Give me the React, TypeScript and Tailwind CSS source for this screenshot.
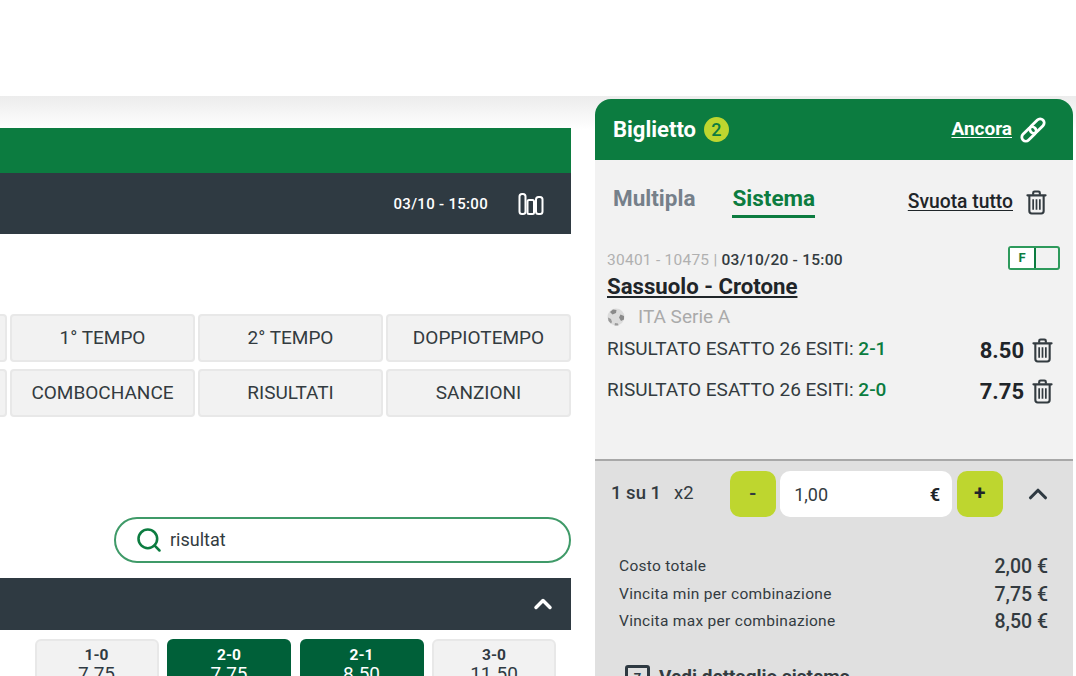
import { ChevronUp, Search } from "lucide-react";

const font = "font-['Roboto',sans-serif]";

function TrashIcon({ className }: { className?: string }) {
  return (
    <svg viewBox="0 0 22 26" fill="none" stroke="currentColor" strokeWidth="2.200" className={className}>
      <path d="M1.500 5.500h19" strokeLinecap="round" />
      <path d="M7.500 5V3a1.500 1.500 0 0 1 1.500-1.500h4A1.500 1.500 0 0 1 14.500 3v2" />
      <path d="M3.500 5.500v16.500a2.500 2.500 0 0 0 2.500 2.500h10a2.500 2.500 0 0 0 2.500-2.500V5.500" />
      <path d="M7.500 9.500v11M11 9.500v11M14.500 9.500v11" strokeWidth="1.800" />
    </svg>
  );
}

function ChainIcon() {
  return (
    <svg viewBox="0 0 26 26" fill="none" stroke="white" strokeWidth="2.800" className="w-[26px] h-[26px]">
      <rect x="13" y="0.500" width="8" height="17" rx="4" transform="rotate(45 17 9)" />
      <rect x="5" y="8.500" width="8" height="17" rx="4" transform="rotate(45 9 17)" />
    </svg>
  );
}

function BarsIcon() {
  return (
    <svg viewBox="0 0 26 22" fill="none" stroke="white" strokeWidth="2" className="w-[26px] h-[22px]">
      <rect x="1.500" y="1" width="6" height="20" rx="2.500" />
      <rect x="9.500" y="7" width="6.500" height="14" rx="1.500" />
      <rect x="18" y="4" width="6.500" height="17" rx="2.500" />
    </svg>
  );
}

function BallIcon() {
  return (
    <svg viewBox="0 0 18 18" className="w-[18px] h-[18px]">
      <circle cx="9" cy="9" r="8.500" fill="#dcdcdc" />
      <path d="M6 1.500l3.500.5-.5 3-3.500 1.500L3 4z" fill="#8a8a8a" />
      <path d="M13.500 6.500l3.500 1.500v3.500l-3 1.500-2-3.500z" fill="#8a8a8a" />
      <path d="M1 9.500l3 1.500 1 3-1 1.500-2.500-2.500z" fill="#9a9a9a" />
      <path d="M8 15l3 .5.500 2h-4z" fill="#9a9a9a" />
    </svg>
  );
}

function MarketButton({ label }: { label: string }) {
  return (
    <div className="w-[185px] h-[48px] shrink-0 flex items-center justify-center rounded-[4px] bg-[#f2f2f2] border-2 border-[#e8e8e8] text-[19px] font-normal text-[#333b40]">
      {label}
    </div>
  );
}

function OddButton({ score, odd, active }: { score: string; odd: string; active?: boolean }) {
  return (
    <div
      className={
        active
          ? "w-[124px] h-[60px] shrink-0 pt-[7px] rounded-[6px] bg-[#006039] text-white text-center"
          : "w-[124px] h-[60px] shrink-0 pt-[5px] rounded-[6px] bg-[#f2f2f2] border-2 border-[#e8e8e8] text-[#2f3a42] text-center"
      }
    >
      <div className="text-[15.500px] font-bold leading-[18px]">{score}</div>
      <div className="text-[19px] leading-[19px]">{odd}</div>
    </div>
  );
}

function SelectionRow({ score, odd }: { score: string; odd: string }) {
  return (
    <div className="flex items-center justify-between h-[41px] pr-[3px]">
      <span className="text-[19px] text-[#333b40]">
        RISULTATO ESATTO 26 ESITI: <span className="font-medium text-[#0b7c3f]">{score}</span>
      </span>
      <span className="flex items-center gap-[8px] pt-[2px]">
        <span className="text-[22px] font-bold text-[#1f2529]">{odd}</span>
        <TrashIcon className="w-[21px] h-[25px] text-[#333b40]" />
      </span>
    </div>
  );
}

function SummaryRow({ label, value }: { label: string; value: string }) {
  return (
    <div className="flex items-center justify-between h-[27.500px]">
      <span className="text-[15.500px] tracking-[0.3px] text-[#333b40]">{label}</span>
      <span className="text-[19.500px] font-medium text-[#333b40] pr-[1px]">{value}</span>
    </div>
  );
}

export default function App() {
  return (
    <div className={`${font} relative w-[1076px] h-[676px] overflow-hidden bg-white`}>
      <div className="h-[96px]" />
      <div className="h-[580px] flex bg-gradient-to-b from-[#ececec] to-white to-[34px] bg-no-repeat">
        {/* match area */}
        <div className="w-[571px] shrink-0 flex flex-col items-end pt-[32px]">
          <div className="w-full h-[45px] shrink-0 bg-[#0c7c40]" />
          <div className="w-full h-[61px] shrink-0 bg-[#2f3a42] flex items-center justify-end pr-[27px] gap-[30px]">
            <span className="text-[15px] font-medium text-white tracking-[0.3px] pt-[2px]">03/10 - 15:00</span>
            <BarsIcon />
          </div>

          <div className="mt-[80px] flex flex-col gap-[7px] w-full shrink-0">
            <div className="flex justify-end gap-[3px]">
              <MarketButton label="1X2" />
              <MarketButton label="1° TEMPO" />
              <MarketButton label="2° TEMPO" />
              <MarketButton label="DOPPIOTEMPO" />
            </div>
            <div className="flex justify-end gap-[3px]">
              <MarketButton label="GOL" />
              <MarketButton label="COMBOCHANCE" />
              <MarketButton label="RISULTATI" />
              <MarketButton label="SANZIONI" />
            </div>
          </div>

          <div className="mt-[100px] w-[457px] h-[46px] shrink-0 rounded-full border-2 border-[#3f9a68] flex items-center pl-[19px] gap-[7px]">
            <Search className="w-[28px] h-[28px] text-[#0c7c40]" strokeWidth={2.200} />
            <span className="text-[18px] text-[#333b40] pb-[2px]">risultat</span>
          </div>

          <div className="mt-[15px] w-full h-[52px] shrink-0 bg-[#2f3a42] flex items-center justify-end pr-[14px]">
            <ChevronUp className="w-[28px] h-[28px] text-white" strokeWidth={3} />
          </div>

          <div className="mt-[9px] shrink-0 flex justify-end gap-[8.500px] pr-[15px]">
            <OddButton score="1-0" odd="7.75" />
            <OddButton score="2-0" odd="7.75" active />
            <OddButton score="2-1" odd="8.50" active />
            <OddButton score="3-0" odd="11.50" />
          </div>
        </div>

        {/* ticket */}
        <div className="ml-[24px] mt-[3px] w-[478px] shrink-0 flex flex-col">
          <div className="h-[61px] shrink-0 rounded-t-[16px] bg-[#0c7c40] flex items-center justify-between pl-[18px] pr-[27px]">
            <div className="flex items-center gap-[8px]">
              <span className="text-[22px] font-bold text-white">Biglietto</span>
              <span className="w-[25px] h-[25px] rounded-full bg-[#bed62f] flex items-center justify-center text-[18px] font-medium text-[#0c7c40]">2</span>
            </div>
            <div className="flex items-center gap-[8px]">
              <span className="text-[19px] font-bold text-white underline underline-offset-2">Ancora</span>
              <ChainIcon />
            </div>
          </div>

          <div className="h-[299px] shrink-0 bg-[#f2f2f2] pl-[12px] pr-[17px]">
            <div className="flex items-start justify-between pt-[23px] pl-[6px]">
              <div className="flex gap-[37px]">
                <span className="text-[22.500px] font-bold leading-[30px] text-[#76808a]">Multipla</span>
                <span className="text-[22.500px] font-bold leading-[30px] text-[#0c7c40] h-[35px] border-b-[3px] border-[#0c7c40]">Sistema</span>
              </div>
              <div className="flex items-center gap-[13px] pt-[5px] pr-[9px]">
                <span className="text-[19.300px] font-medium text-[#1f2529] underline underline-offset-2">Svuota tutto</span>
                <TrashIcon className="w-[21px] h-[25px] text-[#333b40]" />
              </div>
            </div>

            <div className="relative mt-[31px]">
              <div className="absolute right-[-4px] top-[-3px] w-[52px] h-[24px] rounded-[3px] border-2 border-[#2e9a5c] flex">
                <span className="w-[26px] bg-white border-r-2 border-[#0c7c40] flex items-center justify-center text-[13px] font-bold text-[#0c7c40]">F</span>
              </div>
              <div className="text-[15.500px] leading-[22px] tracking-[0.25px] text-[#b0b0b0]">
                30401 - 10475 | <span className="font-medium text-[#333b40]">03/10/20 - 15:00</span>
              </div>
              <div className="mt-[2px] text-[22.200px] font-bold leading-[27px] text-[#1f2529] underline underline-offset-2">Sassuolo - Crotone</div>
              <div className="mt-[2px] flex items-center gap-[13px] h-[30px] text-[19px] text-[#aaaaaa]">
                <BallIcon />
                ITA Serie A
              </div>
              <div className="mt-[-3px]">
                <SelectionRow score="2-1" odd="8.50" />
                <SelectionRow score="2-0" odd="7.75" />
              </div>
            </div>
          </div>

          <div className="flex-1 bg-[#e0e0e0] border-t-2 border-[#a8a8a8] relative">
            <div className="flex items-center h-[66px] pl-[16px]">
              <span className="text-[18.500px] font-medium text-[#333b40]">1 su 1</span>
              <span className="ml-[13px] text-[18.500px] text-[#333b40]">x2</span>
              <div className="ml-[36px] flex gap-[4.500px]">
                <div className="w-[46px] h-[46px] rounded-[10px] bg-[#bed62f] flex items-center justify-center text-[19px] font-bold text-[#333b40]">-</div>
                <div className="w-[172px] h-[46px] rounded-[10px] bg-white flex items-center justify-between pl-[14px] pr-[12px] text-[18px] text-[#333b40]">
                  1,00
                  <span className="font-bold text-[#1f2529]">€</span>
                </div>
                <div className="w-[46px] h-[46px] rounded-[10px] bg-[#bed62f] flex items-center justify-center text-[21px] font-bold text-[#1f2529]">+</div>
              </div>
              <ChevronUp className="ml-[20px] w-[30px] h-[30px] text-[#2f3a42]" strokeWidth={2.500} />
            </div>

            <div className="mt-[26px] pl-[24px] pr-[24px]">
              <SummaryRow label="Costo totale" value="2,00 €" />
              <SummaryRow label="Vincita min per combinazione" value="7,75 €" />
              <SummaryRow label="Vincita max per combinazione" value="8,50 €" />
            </div>

            <div className="mt-[29px] pl-[30px] flex items-start gap-[9px]">
              <span className="relative w-[25px] h-[25px] rounded-[3px] border-[3px] border-[#2f3a42] flex justify-center">
                <span className="mt-[3px] text-[13px] leading-[13px] font-bold text-[#2f3a42]">7</span>
              </span>
              <span className="text-[19px] font-bold leading-[24px] text-[#333b40]">Vedi dettaglio sistema</span>
            </div>
          </div>
        </div>
      </div>
    </div>
  );
}
